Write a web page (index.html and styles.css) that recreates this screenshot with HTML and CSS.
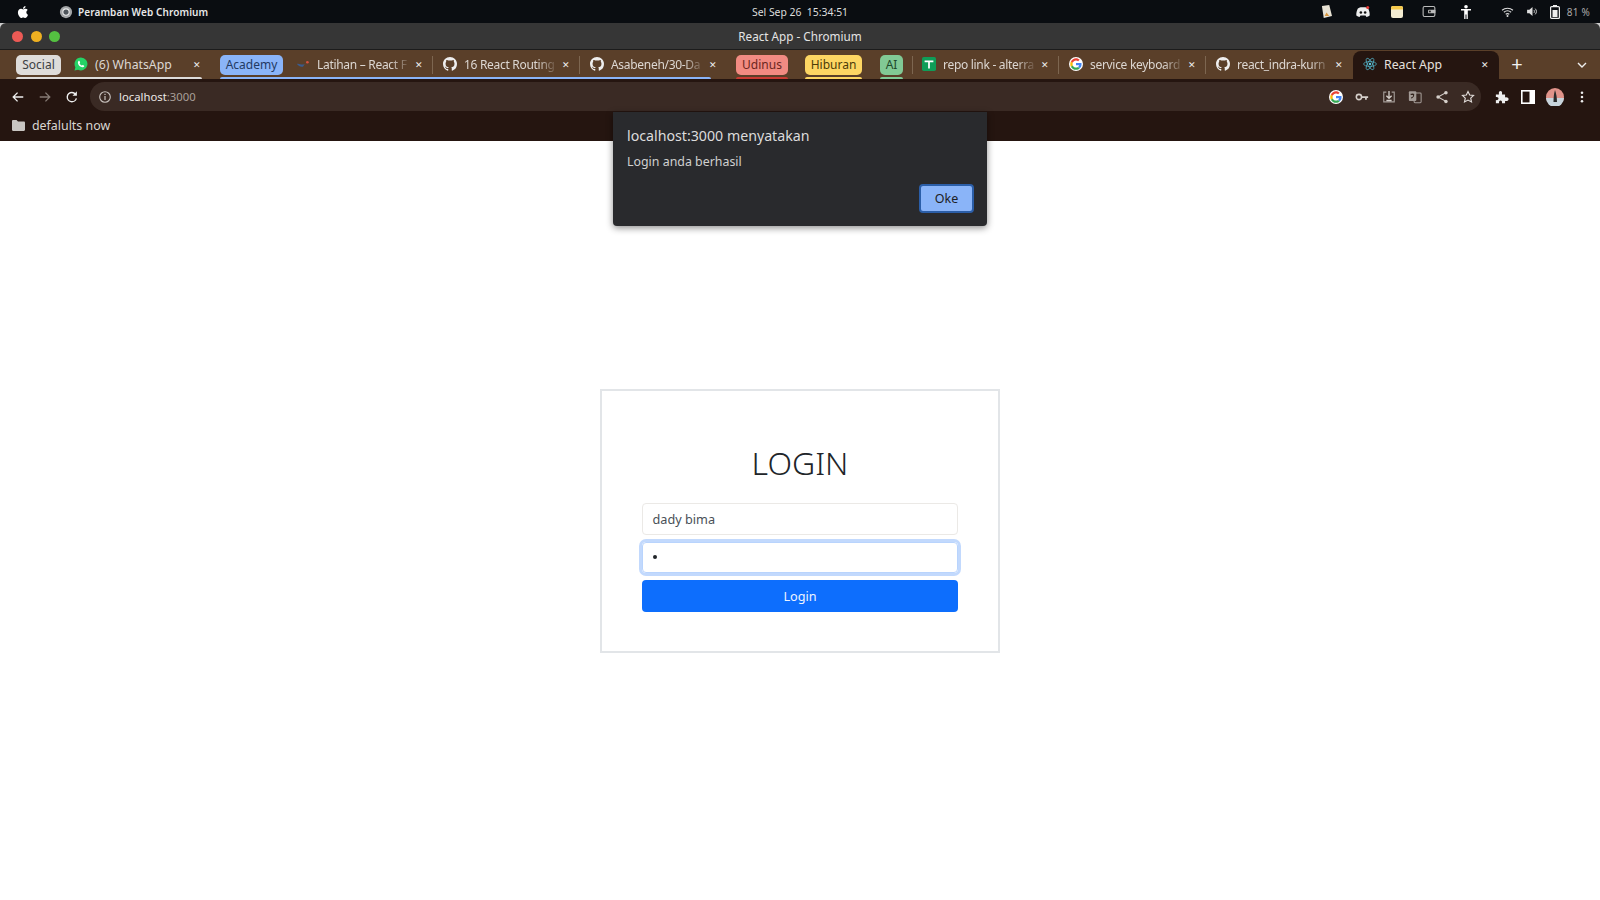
FILE: index.html
```html
<!DOCTYPE html>
<html lang="id">
<head>
  <meta charset="UTF-8" />
  <title>React App</title>
  <link rel="stylesheet" href="styles.css">
</head>
<body>
  <svg class="defs" width="0" height="0">
    <symbol id="gh" viewBox="0 0 16 16"><path fill="#eee" d="M8 0C3.58 0 0 3.58 0 8c0 3.54 2.29 6.53 5.47 7.59.4.07.55-.17.55-.38 0-.19-.01-.82-.01-1.49-2.01.37-2.53-.49-2.69-.94-.09-.23-.48-.94-.82-1.13-.28-.15-.68-.52-.01-.53.63-.01 1.08.58 1.23.82.72 1.21 1.87.87 2.33.66.07-.52.28-.87.51-1.07-1.78-.2-3.64-.89-3.64-3.95 0-.87.31-1.59.82-2.15-.08-.2-.36-1.02.08-2.12 0 0 .67-.21 2.2.82.64-.18 1.32-.27 2-.27.68 0 1.36.09 2 .27 1.53-1.04 2.2-.82 2.2-.82.44 1.1.16 1.92.08 2.12.51.56.82 1.27.82 2.15 0 3.07-1.87 3.75-3.65 3.95.29.25.54.73.54 1.48 0 1.07-.01 1.93-.01 2.2 0 .21.15.46.55.38A8.013 8.013 0 0016 8c0-4.42-3.58-8-8-8z"/></symbol>
    <symbol id="google" viewBox="0 0 48 48">
      <circle cx="24" cy="24" r="24" fill="#fff"/>
      <path fill="#4285f4" d="M43 24.5c0-1.400-.1-2.700-.4-4H24v7.600h10.800c-.5 2.500-1.900 4.600-4 6l6.200 4.800c3.700-3.400 6-8.400 6-14.400z"/>
      <path fill="#34a853" d="M24 44c5.400 0 9.900-1.800 13-4.900l-6.200-4.800c-1.800 1.200-4 1.900-6.800 1.900-5.200 0-9.600-3.500-11.200-8.200l-6.400 5C9.700 39.500 16.300 44 24 44z"/>
      <path fill="#fbbc05" d="M12.800 28c-.8-2.500-.8-5.300 0-7.900l-6.400-5c-2.700 5.500-2.700 12.400 0 17.900z"/>
      <path fill="#ea4335" d="M24 11.900c3 0 5.300 1.100 7.200 2.800l5.400-5.400C33.500 6.100 29.200 4 24 4 16.300 4 9.700 8.500 6.400 15.100l6.400 5C14.400 15.400 18.800 11.900 24 11.900z"/>
    </symbol>
  </svg>

  <div class="topbar">
    <div class="topbar-left">
      <svg class="apple" viewBox="0 0 24 24"><path fill="#fff" d="M17.050 20.280c-.98.95-2.050.8-3.080.35-1.090-.46-2.090-.48-3.240 0-1.440.62-2.200.44-3.060-.35C2.790 15.250 3.510 7.590 9.050 7.310c1.350.07 2.290.74 3.080.8 1.180-.24 2.310-.93 3.570-.84 1.510.12 2.650.72 3.400 1.800-3.120 1.870-2.380 5.980.48 7.130-.57 1.500-1.310 2.990-2.540 4.090zM12.030 7.250c-.15-2.230 1.660-4.070 3.740-4.250.29 2.580-2.340 4.500-3.740 4.250z"/></svg>
      <svg class="app-icon" viewBox="0 0 16 16"><circle cx="8" cy="8" r="7" fill="#a4a6a8"/><circle cx="8" cy="8" r="3.600" fill="#50565c" stroke="#eee" stroke-width="1.200"/></svg>
      <span class="app-name">Peramban Web Chromium</span>
    </div>
    <div class="clock">Sel Sep 26&nbsp;&nbsp;15:34:51</div>
    <div class="tray">
      <svg class="tray-note" viewBox="0 0 12 14"><path fill="#e8e2d4" d="M1 1l8-1 3 12-9 2z"/><path fill="#d9973f" d="M6 8l3 4H4z"/></svg>
      <svg class="tray-discord" viewBox="0 0 16 14"><path fill="#eee" d="M2 3c2-1.400 4-1.600 4.500-1.400h3C10 1.400 12 1.600 14 3c1.400 2.600 2 5.400 1.800 8-1.200 1-2.600 1.500-3.800 1.700l-1-1.500h-6l-1 1.500C2.800 12.500 1.400 12 .2 11 0 8.400.6 5.600 2 3z"/><circle cx="5.500" cy="7.500" r="1.500" fill="#111"/><circle cx="10.500" cy="7.500" r="1.500" fill="#111"/><circle cx="13.500" cy="1.800" r="1.800" fill="#e53935"/></svg>
      <svg class="tray-notes" viewBox="0 0 12 12"><rect width="12" height="12" rx="2" fill="#f4ecd2"/><path fill="#f5c94c" d="M0 2a2 2 0 012-2h8a2 2 0 012 2v1.500H0z"/></svg>
      <svg class="tray-wallet" viewBox="0 0 14 12"><rect x=".6" y=".6" width="12.800" height="10.800" rx="1.500" fill="none" stroke="#bbb" stroke-width="1.200"/><rect x="6" y="4" width="8" height="4" rx="1" fill="#bbb"/><circle cx="8" cy="6" r="1" fill="#111"/></svg>
      <svg class="tray-person" viewBox="0 0 10 14"><circle cx="5" cy="1.800" r="1.800" fill="#fff"/><path fill="#fff" d="M0 4h10v1.500H6.800V14H5.500V9.500h-1V14H3.200V5.500H0z"/></svg>
      <svg class="tray-wifi" viewBox="0 0 14 11"><path fill="none" stroke="#ddd" stroke-width="1.200" d="M1 3.600c3.500-3 8.500-3 12 0M3 5.800c2.400-2 5.600-2 8 0M5 8c1.200-.9 2.800-.9 4 0"/><circle cx="7" cy="9.800" r="1.100" fill="#ddd"/></svg>
      <svg class="tray-volume" viewBox="0 0 12 10"><path fill="#ddd" d="M0 3h2.500L6 0v10L2.500 7H0z"/><path fill="none" stroke="#ddd" d="M7.500 3.300c.8.800.8 2.600 0 3.400M9 1.800c1.800 1.800 1.800 4.600 0 6.400"/></svg>
      <svg class="tray-battery" viewBox="0 0 10 14"><rect x="3" width="4" height="2" fill="#eee"/><rect x=".6" y="1.600" width="8.800" height="11.800" rx="1" fill="none" stroke="#eee" stroke-width="1.200"/><rect x="2.500" y="5" width="5" height="7" fill="#eee"/></svg>
      <span class="tray-text">81 %</span>
    </div>
  </div>

  <div class="window-top">
    <div class="titlebar">
      <div class="lights"><i class="light red"></i><i class="light amber"></i><i class="light green"></i></div>
      <span>React App - Chromium</span>
    </div>
  </div>

  <div class="tabstrip">
    <div class="tab-group group-social">
      <span class="chip chip-social">Social</span>
      <div class="tab">
        <svg class="tab-icon" viewBox="0 0 16 16"><path fill="#25d366" d="M8 .5a7.400 7.400 0 00-6.400 11.100L.6 15.500l4-1A7.400 7.400 0 108 .5z"/><path fill="#fff" d="M5.500 4.300c.9-.6 1.300 1.200 1.500 1.900.1.500-.7.900-.5 1.400.5 1 1.300 1.700 2.300 2.100.5.100.8-.8 1.300-.6.700.3 2 .8 1.700 1.500-.5 1.200-1.900 1.400-3.200.9C6.500 10.800 4.900 9 4.500 7c-.2-1.100.2-2.200 1-2.700z"/></svg>
        <span class="tab-title title-full">(6) WhatsApp</span>
        <span class="tab-close">&#10005;</span>
      </div>
    </div>
    <div class="tab-group group-academy">
      <span class="chip chip-academy">Academy</span>
      <div class="tab sep">
        <svg class="tab-icon" viewBox="0 0 16 16"><path fill="#3b5b8c" d="M1 8c3-1 5 2 9 0l-2 3c-3 1-5-1-7-3z"/><circle cx="13" cy="6" r="1.500" fill="#d8503f"/></svg>
        <span class="tab-title">Latihan – React F</span>
        <span class="tab-close">&#10005;</span>
      </div>
      <div class="tab sep">
        <svg class="tab-icon"><use href="#gh"/></svg>
        <span class="tab-title">16 React Routing</span>
        <span class="tab-close">&#10005;</span>
      </div>
      <div class="tab">
        <svg class="tab-icon"><use href="#gh"/></svg>
        <span class="tab-title">Asabeneh/30-Da</span>
        <span class="tab-close">&#10005;</span>
      </div>
    </div>
    <div class="tab-group group-udinus"><span class="chip chip-udinus">Udinus</span></div>
    <div class="tab-group group-hiburan"><span class="chip chip-hiburan">Hiburan</span></div>
    <div class="tab-group group-ai"><span class="chip chip-ai">AI</span></div>
    <div class="tab sep sep-left">
      <svg class="tab-icon" viewBox="0 0 16 16"><rect width="16" height="16" rx="2" fill="#0f9d58"/><path fill="#fff" d="M3 4h10v2H9v7H7V6H3z"/></svg>
      <span class="tab-title">repo link - alterra</span>
      <span class="tab-close">&#10005;</span>
    </div>
    <div class="tab sep">
      <svg class="tab-icon"><use href="#google"/></svg>
      <span class="tab-title">service keyboard</span>
      <span class="tab-close">&#10005;</span>
    </div>
    <div class="tab">
      <svg class="tab-icon"><use href="#gh"/></svg>
      <span class="tab-title">react_indra-kurn</span>
      <span class="tab-close">&#10005;</span>
    </div>
    <div class="tab tab-active">
      <svg class="tab-icon" viewBox="-12 -12 24 24"><g fill="none" stroke="#58c4dc" stroke-width="1.100"><ellipse rx="11" ry="4.200"/><ellipse rx="11" ry="4.200" transform="rotate(60)"/><ellipse rx="11" ry="4.200" transform="rotate(120)"/></g><circle r="2.100" fill="#58c4dc"/></svg>
      <span class="tab-title title-full">React App</span>
      <span class="tab-close">&#10005;</span>
    </div>
    <span class="new-tab">+</span>
    <svg class="tab-search" viewBox="0 0 10 6"><path fill="none" stroke="#eee" stroke-width="1.400" d="M1 1l4 4 4-4"/></svg>
  </div>

  <div class="toolbar">
    <div class="nav">
      <svg class="tool" viewBox="0 0 16 16"><path fill="none" stroke="#eee" stroke-width="1.500" d="M14 8H2.500M7.500 3l-5 5 5 5"/></svg>
      <svg class="tool" viewBox="0 0 16 16"><path fill="none" stroke="#857a74" stroke-width="1.500" d="M2 8h11.500M8.500 3l5 5-5 5"/></svg>
      <svg class="tool" viewBox="0 0 16 16"><path fill="none" stroke="#eee" stroke-width="1.600" d="M13 9.500A5.300 5.300 0 118 2.800c1.800 0 3 .8 4.200 2.200"/><path fill="#eee" d="M13.600 1.500v5h-5z"/></svg>
    </div>
    <div class="omnibox">
      <svg class="info" viewBox="0 0 12 12"><circle cx="6" cy="6" r="5.300" fill="none" stroke="#c9c3bf" stroke-width="1.100"/><rect x="5.400" y="5" width="1.200" height="4" fill="#c9c3bf"/><rect x="5.400" y="2.800" width="1.200" height="1.200" fill="#c9c3bf"/></svg>
      <span class="url">localhost<span class="url-port">:3000</span></span>
      <div class="omni-actions">
        <span class="slot"><svg class="g-icon"><use href="#google"/></svg></span>
        <span class="slot"><svg class="omni-icon" viewBox="0 0 16 16"><circle cx="4.500" cy="8" r="3" fill="none" stroke="#d5cfca" stroke-width="1.800"/><path fill="#d5cfca" d="M7 7h8v2h-1.500v2h-2V9H7z"/></svg></span>
        <span class="slot"><svg class="omni-icon" viewBox="0 0 16 16"><path fill="none" stroke="#a39b96" stroke-width="1.300" d="M5 2.500H2v11h12v-11h-3"/><path fill="none" stroke="#d5cfca" stroke-width="1.500" d="M8 1v8M5 6.500L8 9.500l3-3M5 12h6"/></svg></span>
        <span class="slot"><svg class="omni-icon" viewBox="0 0 16 16"><rect x="1" y="1.500" width="8.500" height="11" rx="1" fill="#a39b96"/><rect x="7" y="3.500" width="8" height="11" rx="1" fill="none" stroke="#a39b96" stroke-width="1.200"/><path fill="none" stroke="#33241d" stroke-width="1.200" d="M3 5h4M5 4v1M3.500 9c2 0 3-2 3-4"/></svg></span>
        <span class="slot"><svg class="omni-icon" viewBox="0 0 16 16"><path fill="none" stroke="#d5cfca" stroke-width="1.300" d="M12.500 3L3.500 8l9 5"/><circle cx="12.500" cy="3" r="2" fill="#d5cfca"/><circle cx="3.500" cy="8" r="2" fill="#d5cfca"/><circle cx="12.500" cy="13" r="2" fill="#d5cfca"/></svg></span>
        <span class="slot"><svg class="omni-icon" viewBox="0 0 16 16"><path fill="none" stroke="#e3dedb" stroke-width="1.300" d="M8 1.800l1.900 4 4.400.5-3.200 3 .9 4.400L8 11.500l-4 2.200.9-4.400-3.200-3 4.400-.5z"/></svg></span>
      </div>
    </div>
    <div class="actions">
      <span class="slot-wide"><svg class="omni-icon" viewBox="0 0 16 16"><path fill="#eee" d="M1 5h3.500C4 2 5 1 6.300 1S8.500 2 8 5h3.500v3.500C14 8 15.500 9 15.500 10.500S14 13 11.500 12.500V15H8c.4-2-.4-3-1.700-3S4.300 13 4.700 15H1v-3.500C3 12 4 11 4 9.800S3 7.500 1 8z"/></svg></span>
      <span class="slot-wide"><svg class="omni-icon" viewBox="0 0 14 14"><rect x=".8" y=".8" width="12.400" height="12.400" fill="none" stroke="#fff" stroke-width="1.600"/><rect x="8.500" y="1" width="4.500" height="12" fill="#fff"/></svg></span>
      <span class="slot-wide"><svg class="avatar" viewBox="0 0 18 18"><circle cx="9" cy="9" r="9" fill="#e0938a"/><path fill="#c8d4dc" d="M0 10h18a9 9 0 01-18 0z"/><path fill="#2b2b2b" d="M9 2c1 3 2 7 2 12H7.500C7.500 9 8 5 9 2z"/></svg></span>
      <span class="slot-wide"><svg class="dots" viewBox="0 0 4 14"><circle cx="2" cy="2" r="1.500" fill="#eee"/><circle cx="2" cy="7" r="1.500" fill="#eee"/><circle cx="2" cy="12" r="1.500" fill="#eee"/></svg></span>
    </div>
  </div>

  <div class="bookmarks">
    <svg class="folder" viewBox="0 0 13 11"><path fill="#c9c5c2" d="M0 1.200C0 .5.500 0 1.200 0h3.300l1.500 1.500h5.800c.7 0 1.200.5 1.200 1.200v7c0 .7-.5 1.200-1.200 1.200H1.200C.5 11 0 10.500 0 9.800z"/></svg>
    <span>defalults now</span>
  </div>

  <main class="page">
    <form class="login-card">
      <h1 class="login-title">LOGIN</h1>
      <div class="field">dady bima</div>
      <div class="field field-focus"><span class="dot"></span></div>
      <button type="button" class="login-btn">Login</button>
    </form>
  </main>

  <div class="alert">
    <div class="alert-title">localhost:3000 menyatakan</div>
    <div class="alert-msg">Login anda berhasil</div>
    <div class="alert-foot"><button type="button" class="alert-ok">Oke</button></div>
  </div>
</body>
</html>
```

FILE: styles.css
```css
* { margin: 0; padding: 0; box-sizing: border-box; }

html, body {
  height: 100%;
}

body {
  position: relative;
  display: flex;
  flex-direction: column;
  height: 900px;
  overflow: hidden;
  background: #fff;
  font-family: "Noto Sans", "Open Sans", sans-serif;
}

.defs { position: absolute; }

/* top bar */
.topbar {
  position: relative;
  display: flex;
  justify-content: space-between;
  align-items: center;
  height: 23px;
  background: #0a0d11;
  color: #e8e8e8;
  font-size: 10px;
}

.topbar-left {
  display: flex;
  align-items: center;
  padding-left: 15px;
}

.apple { width: 16px; height: 16px; }
.app-icon { width: 14px; height: 14px; margin-left: 28px; }
.app-name { margin-left: 5px; font-weight: 600; letter-spacing: 0.1px; }

.clock {
  position: absolute;
  left: 0;
  right: 0;
  text-align: center;
  font-size: 10.4px;
  color: #ddd;
}

.tray {
  display: flex;
  align-items: center;
  padding-right: 10px;
}

.tray svg { display: block; }
.tray-note { width: 11px; height: 13px; }
.tray-discord { width: 14px; height: 12px; margin-left: 24px; }
.tray-notes { width: 12px; height: 12px; margin-left: 21px; }
.tray-wallet { width: 14px; height: 11px; margin-left: 19px; }
.tray-person { width: 10px; height: 14px; margin-left: 25px; }
.tray-wifi { width: 13px; height: 10px; margin-left: 30px; }
.tray-volume { width: 11px; height: 9px; margin-left: 13px; }
.tray-battery { width: 10px; height: 14px; margin-left: 12px; }
.tray-text { margin-left: 7px; color: #aaa; font-size: 10px; letter-spacing: 0.2px; }

/* title bar */
.window-top {
  background: #ccc;
}

.titlebar {
  position: relative;
  display: flex;
  justify-content: center;
  align-items: center;
  height: 27px;
  background: #363636;
  border-radius: 6px 6px 0 0;
  border-bottom: 1px solid #1c1c1c;
  color: #e4e4e4;
  font-size: 11.7px;
}

.lights {
  position: absolute;
  left: 12px;
  top: 8px;
  display: flex;
  gap: 7.5px;
}

.light {
  width: 11px;
  height: 11px;
  border-radius: 50%;
}

.red { background: #ec5a55; }
.amber { background: #efb021; }
.green { background: #54c041; }

/* tabs */
.tabstrip {
  display: flex;
  align-items: stretch;
  height: 29px;
  padding-left: 16px;
  background: #5a3f29;
  color: #ddd7d2;
  font-size: 12.5px;
}

.tab-group {
  position: relative;
  display: flex;
  align-items: stretch;
}

.tab-group::after {
  content: "";
  position: absolute;
  left: 0;
  bottom: 0;
  height: 2px;
  border-radius: 2px 2px 0 0;
}

.group-social::after { right: 9px; background: #dedcda; }
.group-academy { margin-left: 9px; }
.group-academy::after { right: 16px; background: #8ab4f8; }
.group-udinus { margin-left: 9px; }
.group-udinus::after { right: 0; background: #c83a32; }
.group-hiburan { margin-left: 17px; }
.group-hiburan::after { right: 0; background: #fdd663; }
.group-ai { margin-left: 18px; margin-right: 9px; }
.group-ai::after { right: 0; background: #81c995; }

.chip {
  align-self: flex-start;
  margin-top: 5px;
  height: 20px;
  border-radius: 5px;
  text-align: center;
  line-height: 20px;
  font-size: 12px;
  color: #3c4043;
}

.chip-social { width: 45px; margin-right: 3px; background: #dedcda; }
.chip-academy { width: 63px; margin-right: 3px; background: #8ab4f8; color: #233a63; }
.chip-udinus { width: 52px; background: #f28b82; color: #6b2620; }
.chip-hiburan { width: 57px; background: #fdd663; color: #4d3c08; }
.chip-ai { width: 23px; background: #81c995; color: #1f4a2c; }

.tab {
  flex: none;
  display: flex;
  align-items: center;
  width: 147px;
  padding: 0 8px 1px 10px;
}

.tab.sep {
  background: linear-gradient(#7d6650, #7d6650) right center / 1px 18px no-repeat;
}

.tab.sep-left {
  background:
    linear-gradient(#7d6650, #7d6650) right center / 1px 18px no-repeat,
    linear-gradient(#7d6650, #7d6650) left center / 1px 18px no-repeat;
}

.tab-icon {
  flex: none;
  width: 14px;
  height: 14px;
}

.tab-title {
  flex: 1;
  min-width: 0;
  margin-left: 7px;
  white-space: nowrap;
  letter-spacing: -0.3px;
  font-size: 12px;
  -webkit-mask-image: linear-gradient(to right, #000 78%, transparent 100%);
  mask-image: linear-gradient(to right, #000 78%, transparent 100%);
}

.tab-title.title-full {
  letter-spacing: 0;
  font-size: 12.3px;
  -webkit-mask-image: none;
  mask-image: none;
}

.tab-close {
  flex: none;
  width: 12px;
  margin-left: 2px;
  text-align: center;
  font-size: 9px;
  color: #eee;
}

.tab-active {
  width: 146px;
  margin-top: 1px;
  padding-bottom: 2px;
  background: #251510;
  border-radius: 8px 8px 0 0;
  color: #e6e1de;
}

.new-tab {
  margin-left: 12px;
  width: 12px;
  text-align: center;
  font-size: 20px;
  line-height: 27px;
  color: #f2f2f2;
}

.tab-search {
  align-self: center;
  width: 10px;
  height: 6px;
  margin-left: auto;
  margin-right: 13px;
}

/* toolbar */
.toolbar {
  display: flex;
  align-items: flex-start;
  height: 32px;
  padding: 3px 5px 0 5px;
  background: #251510;
}

.nav {
  display: flex;
  gap: 1px;
  height: 29px;
  margin-right: 5px;
  align-items: center;
}

.tool {
  width: 26px;
  height: 14px;
}

.omnibox {
  display: flex;
  align-items: center;
  flex: 1;
  height: 29px;
  padding-left: 9px;
  background: #3a2a24;
  border-radius: 15px;
  font-size: 11.3px;
}

.info { width: 12px; height: 12px; }

.url {
  margin-left: 8px;
  color: #ece8e5;
}

.url-port { color: #a89f99; }

.omni-actions {
  display: flex;
  margin-left: auto;
}

.slot, .slot-wide {
  display: flex;
  justify-content: center;
  align-items: center;
  height: 29px;
}

.slot { width: 26.500px; }
.slot-wide { width: 26.670px; }

.g-icon { width: 14px; height: 14px; }
.omni-icon { width: 14px; height: 14px; }
.avatar { width: 18px; height: 18px; }
.dots { width: 4px; height: 12px; }

.actions {
  display: flex;
  margin-left: 7px;
}

/* bookmarks */
.bookmarks {
  display: flex;
  align-items: center;
  height: 30px;
  padding: 0 0 1px 12px;
  background: #251510;
  color: #d9d5d2;
  font-size: 12.4px;
}

.folder {
  width: 13px;
  height: 11px;
  margin-right: 7px;
}

/* login page */
.page {
  flex: 1;
  display: flex;
  justify-content: center;
  align-items: center;
}

.login-card {
  display: flex;
  flex-direction: column;
  width: 400px;
  height: 264px;
  padding: 50px 40px 0;
  border: 2px solid #e2e5e8;
}

.login-title {
  margin-bottom: 18px;
  text-align: center;
  font-size: 32px;
  font-weight: 300;
  line-height: 44px;
  color: #212529;
}

.field {
  display: flex;
  align-items: center;
  height: 32px;
  padding: 0 9.5px;
  border: 1px solid #ebe9e6;
  border-radius: 4px;
  color: #495057;
  font-size: 12.7px;
}

.field-focus {
  height: 31px;
  margin-top: 7px;
  border: 1px solid #b9d4fd;
  box-shadow: 0 0 0 3px #c2d9fd;
}

.dot {
  width: 4px;
  height: 4px;
  border-radius: 50%;
  background: #212529;
}

.login-btn {
  height: 32px;
  margin-top: 7px;
  border: none;
  border-radius: 4px;
  background: #0d6efd;
  color: #eef4ff;
  font-family: inherit;
  font-size: 12.7px;
}

/* alert dialog */
.alert {
  position: absolute;
  top: 112px;
  left: 613px;
  width: 374px;
  height: 114px;
  padding: 13px 13px 0 14px;
  background: #292a2d;
  border-radius: 0 0 4px 4px;
  box-shadow: 0 2px 7px rgba(0, 0, 0, 0.45);
  color: #dcdcdc;
}

.alert-title {
  font-size: 14.2px;
  line-height: 22px;
}

.alert-msg {
  margin-top: 5px;
  font-size: 12.4px;
  line-height: 20px;
  color: #d0d0d0;
}

.alert-foot {
  display: flex;
  justify-content: flex-end;
  margin-top: 12px;
}

.alert-ok {
  width: 55px;
  height: 29px;
  background: #8ab4f8;
  border: 2px solid #2b5ea8;
  border-radius: 4px;
  color: #202124;
  font-family: inherit;
  font-size: 12.5px;
}
```
